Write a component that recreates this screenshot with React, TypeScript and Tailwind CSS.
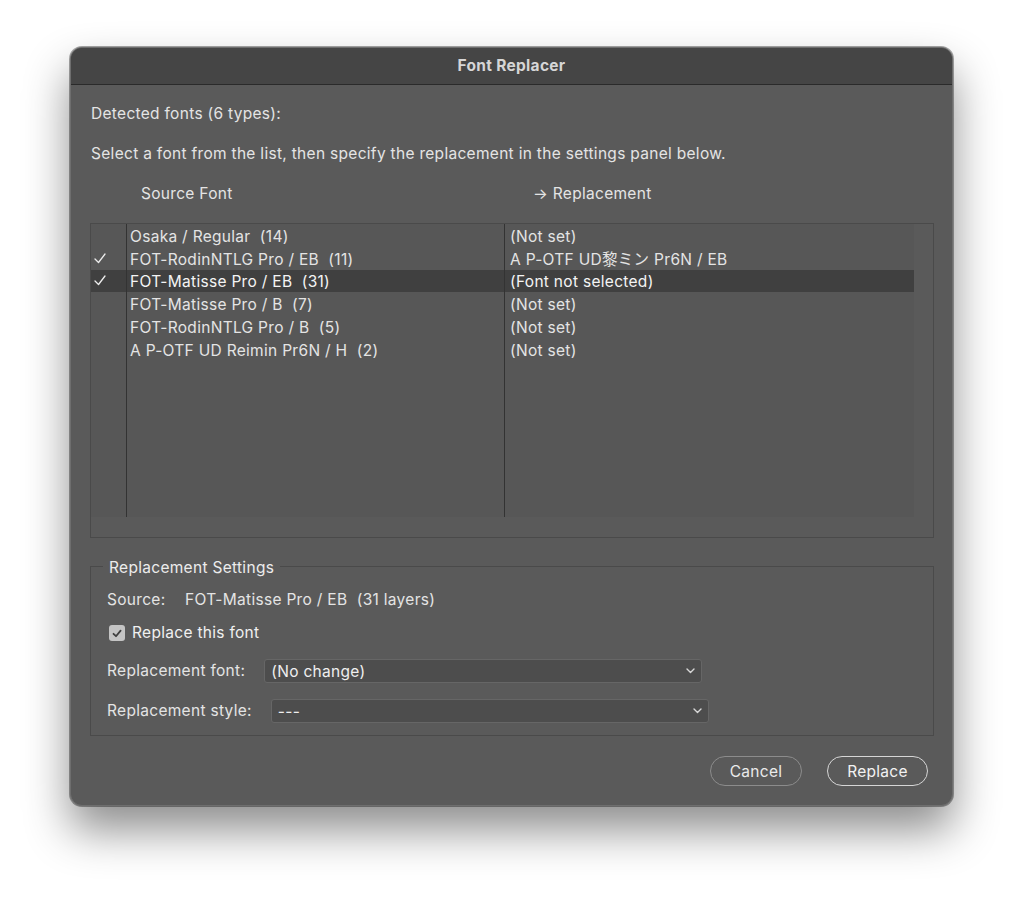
import React from 'react';

const rows = [
  { checked: false, source: 'Osaka / Regular  (14)', target: '(Not set)' },
  { checked: true, source: 'FOT-RodinNTLG Pro / EB  (11)', target: 'A P-OTF UD黎ミン Pr6N / EB' },
  { checked: true, source: 'FOT-Matisse Pro / EB  (31)', target: '(Font not selected)', selected: true },
  { checked: false, source: 'FOT-Matisse Pro / B  (7)', target: '(Not set)' },
  { checked: false, source: 'FOT-RodinNTLG Pro / B  (5)', target: '(Not set)' },
  { checked: false, source: 'A P-OTF UD Reimin Pr6N / H  (2)', target: '(Not set)' },
];

const Check = () => (
  <svg width="12" height="11" viewBox="0 0 12 11" fill="none">
    <path d="M1 6 L4.5 9.5 L11 1" stroke="#ececec" strokeWidth="1.3" strokeLinecap="round" strokeLinejoin="round" />
  </svg>
);

const Chevron = () => (
  <svg width="9" height="6" viewBox="0 0 9 6" fill="none">
    <path d="M1 1 L4.5 4.5 L8 1" stroke="#d8d8d8" strokeWidth="1.4" strokeLinecap="round" strokeLinejoin="round" />
  </svg>
);

const Dropdown: React.FC<{ value: string }> = ({ value }) => (
  <div className="w-[438px] h-[24px] flex items-center justify-between pl-[6px] pr-[6px] bg-[#4d4d4d] border border-[#666666] rounded-[3px] text-[#efefef]">
    <span className="pt-[1px]">{value}</span>
    <Chevron />
  </div>
);

export default function App() {
  return (
    <div
      className="min-h-[899px] bg-white pt-[47px] pl-[70px] text-[15.5px] leading-[18px] tracking-[0.3px] text-[#e4e4e4]"
      style={{ fontFamily: 'Inter, "Noto Sans CJK JP", sans-serif' }}
    >
      <div className="w-[883px] rounded-[12px] overflow-hidden bg-[#5a5a5a] border border-[#6e6e6e] shadow-[0_0_0_1px_rgba(0,0,0,0.35),0_24px_45px_rgba(0,0,0,0.45)]">
        {/* Title bar */}
        <div className="h-[37px] pb-[1px] flex items-center justify-center bg-[#454545] border-b border-[#2a2a2a] font-bold text-[15.5px] text-[#d6d6d6]">
          Font Replacer
        </div>

        <div className="pl-[19px] pr-[18px] pb-[19px]">
          <div className="mt-[20px] h-[18px] pl-[1px]">Detected fonts (6 types):</div>
          <div className="mt-[22px] h-[18px] pl-[1px]">
            Select a font from the list, then specify the replacement in the settings panel below.
          </div>

          {/* Column headers */}
          <div className="mt-[22px] h-[18px] flex">
            <div className="w-[51px]" />
            <div className="w-[392px]">Source Font</div>
            <div>→ Replacement</div>
          </div>

          {/* List */}
          <div className="mt-[20px] h-[315px] flex flex-col border border-[#4a4a4a] bg-[#5a5a5a]">
            <div className="flex flex-1">
              <div className="w-[823px] flex flex-col bg-[#575757]">
                {rows.map((r) => (
                  <div
                    key={r.source}
                    className={`h-[22.8px] flex items-center ${r.selected ? 'bg-[#404040] text-[#f4f4f4]' : ''}`}
                  >
                    <div className="w-[35px] h-full flex items-center pl-[3px]">{r.checked && <Check />}</div>
                    <div className="w-[378px] h-full flex items-center pl-[3px] pt-[3px] border-l border-[#333333] whitespace-pre">
                      {r.source}
                    </div>
                    <div className="flex-1 h-full flex items-center pl-[5px] pt-[3px] border-l border-[#333333] whitespace-pre">
                      {r.target}
                    </div>
                  </div>
                ))}
                <div className="flex flex-1">
                  <div className="w-[35px]" />
                  <div className="w-[378px] border-l border-[#333333]" />
                  <div className="flex-1 border-l border-[#333333]" />
                </div>
              </div>
              <div className="flex-1" />
            </div>
            <div className="h-[20px]" />
          </div>

          {/* Replacement settings */}
          <fieldset className="mt-[17px] border border-[#4a4a4a] px-[16px] pt-[14px] pb-[12px]">
            <legend className="ml-[-4px] px-[6px] pt-[4px] leading-[18px] text-[#ececec]">Replacement Settings</legend>
            <div className="h-[18px] flex">
              <span className="w-[78px]">Source:</span>
              <span className="whitespace-pre">FOT-Matisse Pro / EB  (31 layers)</span>
            </div>
            <div className="mt-[15px] h-[18px] flex items-center">
              <div className="ml-[2px] w-[16px] h-[16px] rounded-[3px] bg-[#c4c4c4] flex items-center justify-center">
                <svg width="10" height="9" viewBox="0 0 10 9" fill="none">
                  <path d="M1.5 4.8 L4 7.2 L8.6 1.6" stroke="#3f3f3f" strokeWidth="1.8" strokeLinecap="round" strokeLinejoin="round" />
                </svg>
              </div>
              <span className="ml-[7px] text-[#f0f0f0]">Replace this font</span>
            </div>
            <div className="mt-[17px] flex items-center gap-[19px]">
              <span>Replacement font:</span>
              <Dropdown value="(No change)" />
            </div>
            <div className="mt-[16px] flex items-center gap-[19px]">
              <span>Replacement style:</span>
              <Dropdown value="---" />
            </div>
          </fieldset>

          {/* Buttons */}
          <div className="mt-[20px] pr-[6px] flex justify-end gap-[25px]">
            <button className="w-[92px] h-[30px] pt-[2px] rounded-full border border-[#8c8c8c] text-[#eaeaea]">Cancel</button>
            <button className="w-[101px] h-[30px] pt-[2px] rounded-full border border-[#d6d6d6] text-[#f2f2f2]">Replace</button>
          </div>
        </div>
      </div>
    </div>
  );
}
